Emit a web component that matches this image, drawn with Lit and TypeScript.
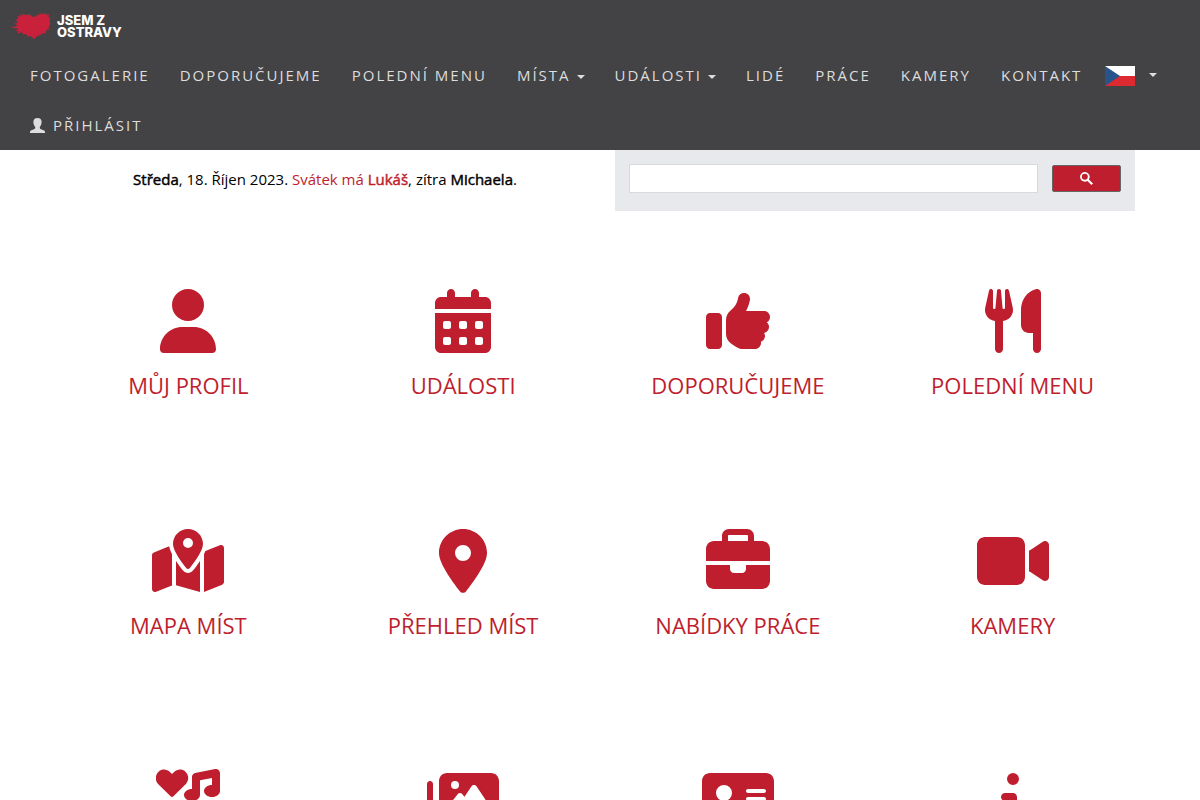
import { LitElement, html, svg, css } from "lit";
import { customElement } from "lit/decorators.js";

interface Tile {
  label: string;
  name?: string;
  width: number;
  path: string;
}

interface NavItem {
  label: string;
  menu?: boolean;
}

const NAV: NavItem[] = [
  { label: "Fotogalerie" },
  { label: "Doporučujeme" },
  { label: "Polední menu" },
  { label: "Místa", menu: true },
  { label: "Události", menu: true },
  { label: "Lidé" },
  { label: "Práce" },
  { label: "Kamery" },
  { label: "Kontakt" },
];

const TILES: Tile[] = [
  {
    label: "Můj profil",
    width: 448,
    path: "M224 256A128 128 0 1 0 224 0a128 128 0 1 0 0 256zm-45.7 48C79.8 304 0 383.8 0 482.3C0 498.7 13.3 512 29.7 512H418.3c16.4 0 29.7-13.3 29.7-29.7C448 383.8 368.2 304 269.7 304H178.3z",
  },
  {
    label: "Události",
    width: 448,
    path: "M128 0c17.7 0 32 14.3 32 32V64H288V32c0-17.7 14.3-32 32-32s32 14.3 32 32V64h48c26.5 0 48 21.5 48 48v48H0V112C0 85.5 21.5 64 48 64H96V32c0-17.7 14.3-32 32-32zM0 192H448V464c0 26.5-21.5 48-48 48H48c-26.5 0-48-21.5-48-48V192zm64 80v32c0 8.8 7.2 16 16 16h32c8.8 0 16-7.2 16-16V272c0-8.8-7.2-16-16-16H80c-8.8 0-16 7.2-16 16zm128 0v32c0 8.8 7.2 16 16 16h32c8.8 0 16-7.2 16-16V272c0-8.8-7.2-16-16-16H208c-8.8 0-16 7.2-16 16zm144-16c-8.8 0-16 7.2-16 16v32c0 8.8 7.2 16 16 16h32c8.8 0 16-7.2 16-16V272c0-8.8-7.2-16-16-16H336zM64 400v32c0 8.8 7.2 16 16 16h32c8.8 0 16-7.2 16-16V400c0-8.8-7.2-16-16-16H80c-8.8 0-16 7.2-16 16zm144-16c-8.8 0-16 7.2-16 16v32c0 8.8 7.2 16 16 16h32c8.8 0 16-7.2 16-16V400c0-8.8-7.2-16-16-16H208zm112 16v32c0 8.8 7.2 16 16 16h32c8.8 0 16-7.2 16-16V400c0-8.8-7.2-16-16-16H336c-8.8 0-16 7.2-16 16z",
  },
  {
    label: "Doporučujeme",
    width: 512,
    path: "M313.4 32.9c26 5.2 42.9 30.5 37.7 56.5l-2.3 11.4c-5.3 26.7-15.1 52.1-28.8 75.2H464c26.5 0 48 21.5 48 48c0 18.5-10.5 34.6-25.9 42.6C497 275.4 504 288.9 504 304c0 23.4-16.8 42.9-38.9 47.1c4.4 7.3 6.9 15.8 6.9 24.9c0 21.3-13.9 39.4-33.1 45.6c.7 3.3 1.1 6.8 1.1 10.4c0 26.5-21.5 48-48 48H294.5c-19 0-37.5-5.6-53.3-16.1l-38.5-25.7C176 420.4 160 390.4 160 358.3V320 272 247.1c0-29.2 13.3-56.7 36-75l7.4-5.9c26.5-21.2 44.6-51 51.2-84.2l2.3-11.4c5.2-26 30.5-42.9 56.5-37.7zM32 192H96c17.7 0 32 14.3 32 32V448c0 17.7-14.3 32-32 32H32c-17.7 0-32-14.3-32-32V224c0-17.7 14.3-32 32-32z",
  },
  {
    label: "Polední menu",
    width: 448,
    path: "M416 0C400 0 288 32 288 176V288c0 35.3 28.7 64 64 64h32V480c0 17.7 14.3 32 32 32s32-14.3 32-32V352 240 32c0-17.7-14.3-32-32-32zM64 16C64 7.8 57.9 1 49.7 .1S34.2 4.6 32.4 12.5L2.1 148.8C.7 155.1 0 161.5 0 167.9c0 45.9 35.1 83.6 80 87.7V480c0 17.7 14.3 32 32 32s32-14.3 32-32V255.6c44.9-4.1 80-41.8 80-87.7c0-6.4-.7-12.8-2.1-19.1L191.6 12.5c-1.8-8-9.3-13.3-17.4-12.4S160 7.8 160 16V150.2c0 5.4-4.4 9.8-9.8 9.8c-5.1 0-9.3-3.9-9.8-9L127.9 14.6C127.2 6.3 120.3 0 112 0s-15.2 6.3-15.9 14.6L83.7 151c-.5 5.1-4.7 9-9.8 9c-5.4 0-9.8-4.4-9.8-9.8V16zm48.3 152l-.3 0-.3 0 .3-.7 .3 .7z",
  },
  {
    label: "Mapa míst",
    width: 576,
    path: "M408 120c0 54.6-73.1 151.9-105.2 192c-7.7 9.6-22 9.6-29.6 0C241.1 271.9 168 174.6 168 120C168 53.7 221.7 0 288 0s120 53.7 120 120zm8 80.4c3.5-6.9 6.7-13.8 9.6-20.6c.5-1.2 1-2.5 1.5-3.7l116-46.4C558.9 123.4 576 135 576 152V422.8c0 9.8-6 18.6-15.1 22.3L416 503V200.4zM137.6 138.3c2.4 14.1 7.2 28.3 12.8 41.5c2.9 6.8 6.1 13.7 9.6 20.6V451.8L32.9 502.7C17.1 509 0 497.4 0 480.4V209.6c0-9.8 6-18.6 15.1-22.3l122.6-49zM327.8 332c13.9-17.4 35.7-45.7 56.2-77V504.3L192 449.4V255c20.5 31.3 42.3 59.6 56.2 77c20.5 25.6 59.1 25.6 79.6 0zM288 152a40 40 0 1 0 0-80 40 40 0 1 0 0 80z",
  },
  {
    label: "Přehled míst",
    width: 384,
    path: "M215.7 499.2C267 435 384 279.4 384 192C384 86 298 0 192 0S0 86 0 192c0 87.4 117 243 168.3 307.2c12.3 15.3 35.1 15.3 47.4 0zM192 128a64 64 0 1 1 0 128 64 64 0 1 1 0-128z",
  },
  {
    label: "Nabídky práce",
    width: 512,
    path: "M184 48H328c4.4 0 8 3.6 8 8V96H176V56c0-4.4 3.6-8 8-8zm-56 8V96H64C28.7 96 0 124.7 0 160v96H192 320 512V160c0-35.3-28.7-64-64-64H384V56c0-30.9-25.1-56-56-56H184c-30.9 0-56 25.1-56 56zM512 288H320v32c0 17.7-14.3 32-32 32H224c-17.7 0-32-14.3-32-32V288H0V416c0 35.3 28.7 64 64 64H448c35.3 0 64-28.7 64-64V288z",
  },
  {
    label: "Kamery",
    width: 576,
    path: "M0 128C0 92.7 28.7 64 64 64H320c35.3 0 64 28.7 64 64V384c0 35.3-28.7 64-64 64H64c-35.3 0-64-28.7-64-64V128zM559.1 99.8c10.4 5.6 16.9 16.4 16.9 28.2V384c0 11.8-6.5 22.6-16.9 28.2s-23 5-32.9-1.6l-96-64L416 337.1V320 192 174.9l14.2-9.5 96-64c9.8-6.5 22.4-7.2 32.9-1.6z",
  },
  {
    label: "",
    name: "Zábava",
    width: 512,
    path: "M500.3 7.3C507.7 13.3 512 22.4 512 32V176c0 26.5-28.7 48-64 48s-64-21.5-64-48s28.7-48 64-48V71L352 90.2V208c0 26.5-28.7 48-64 48s-64-21.5-64-48s28.7-48 64-48V64c0-15.3 10.8-28.4 25.7-31.4l160-32c9.4-1.9 19.1 .6 26.6 6.6zM116.7 218.9L18.6 121.6C-9.9 93-8 45.5 22.6 19.4c26.5-22.6 66-18.6 90.4 6.5L128 40l15-14.1c24.4-25.1 63.9-29.1 90.4-6.5 30.6 26.1 32.3 73.6 3.8 102.2l-97.9 97.3c-6.3 6.3-16.3 6.3-22.6 0z",
  },
  {
    label: "",
    name: "Fotografie",
    width: 576,
    path: "M160 32c-35.3 0-64 28.7-64 64V320c0 35.3 28.7 64 64 64H512c35.3 0 64-28.7 64-64V96c0-35.3-28.7-64-64-64H160zM396 138.7l96 144c4.9 7.4 5.4 16.8 1.2 24.6S480.9 320 472 320H328 280 200c-9.2 0-17.6-5.3-21.6-13.6s-2.9-18.2 2.9-25.4l64-80c4.6-5.7 11.4-9 18.7-9s14.2 3.3 18.7 9l17.3 21.6 56-84C360.5 132 368 128 376 128s15.5 4 20 10.7zM192 128a32 32 0 1 1 64 0 32 32 0 1 1 -64 0zM48 120c0-13.3-10.7-24-24-24S0 106.7 0 120V344c0 75.1 60.9 136 136 136H456c13.3 0 24-10.7 24-24s-10.7-24-24-24H136c-48.6 0-88-39.4-88-88V120z",
  },
  {
    label: "",
    name: "Kontakt",
    width: 576,
    path: "M64 32C28.7 32 0 60.7 0 96V416c0 35.3 28.7 64 64 64H512c35.3 0 64-28.7 64-64V96c0-35.3-28.7-64-64-64H64zm80 256h64c44.2 0 80 35.8 80 80c0 8.8-7.2 16-16 16H80c-8.8 0-16-7.2-16-16c0-44.2 35.8-80 80-80zm-32-96a64 64 0 1 1 128 0 64 64 0 1 1 -128 0zm256-32H496c8.8 0 16 7.2 16 16s-7.2 16-16 16H368c-8.8 0-16-7.2-16-16s7.2-16 16-16zm0 64H496c8.8 0 16 7.2 16 16s-7.2 16-16 16H368c-8.8 0-16-7.2-16-16s7.2-16 16-16z",
  },
  {
    label: "",
    name: "Informace",
    width: 192,
    path: "M48 80a48 48 0 1 1 96 0A48 48 0 1 1 48 80zM0 224c0-17.7 14.3-32 32-32H96c17.7 0 32 14.3 32 32V448h32c17.7 0 32 14.3 32 32s-14.3 32-32 32H32c-17.7 0-32-14.3-32-32s14.3-32 32-32H64V256H32c-17.7 0-32-14.3-32-32z",
  },
];

@customElement("app-root")
export class AppRoot extends LitElement {
  static styles = css`
    :host {
      display: block;
      min-height: 100vh;
      background: #fff;
      color: #000;
      font: 15px/20px "Open Sans", sans-serif;
    }
    * {
      box-sizing: border-box;
    }
    a {
      color: inherit;
      text-decoration: none;
    }
    .navbar {
      background: #434345;
      color: #ddd;
    }
    .brand {
      display: flex;
      align-items: center;
      gap: 6px;
      width: max-content;
      height: 50px;
      padding: 2px 10px 0 11px;
      color: #fff;
    }
    .splash {
      display: block;
      width: 40px;
      height: 28px;
    }
    .brand-text {
      display: flex;
      flex-direction: column;
      font: 800 13px/12px Inter, sans-serif;
    }
    .menu {
      display: flex;
      flex-wrap: wrap;
      margin: 0;
      padding: 0 15px;
      list-style: none;
      letter-spacing: 2px;
      text-transform: uppercase;
    }
    .menu-link {
      display: flex;
      align-items: center;
      height: 50px;
      padding: 0 15px;
      gap: 6px;
      white-space: nowrap;
    }
    .flag-link {
      padding: 2px 8px 0;
      gap: 14px;
    }
    .login-link {
      gap: 8px;
    }
    .flag {
      display: block;
      width: 30px;
      height: 20px;
    }
    .caret {
      border: 4px solid transparent;
      border-top-color: currentColor;
      border-bottom: 0;
    }
    .menu-link .caret {
      margin-top: 3px;
    }
    .flag-link .caret {
      margin: 0 0 2px;
    }
    .person {
      display: block;
      width: 15px;
      height: 15px;
      fill: currentColor;
    }
    .content {
      padding: 0 50px;
    }
    .info {
      display: grid;
      grid-template-columns: 1fr 1fr;
    }
    .date {
      margin: 0;
      padding-top: 19px;
      text-align: center;
    }
    .strong {
      font-weight: 400;
      -webkit-text-stroke: 0.03em currentColor;
    }
    .red {
      color: #be1e2d;
    }
    .search {
      display: flex;
      align-items: center;
      gap: 14px;
      margin: 0 15px;
      padding: 14px 14px 18px;
      background: #e8e9ed;
    }
    .query {
      flex: 1;
      min-width: 0;
      height: 29px;
      padding: 0 8px;
      border: 1px solid #d9d9d9;
      border-radius: 0;
      background: #fff;
      font: inherit;
    }
    .go {
      display: flex;
      align-items: center;
      justify-content: center;
      width: 69px;
      height: 27px;
      padding: 0;
      border: 1px solid #666;
      border-radius: 2px;
      background: #be1e2d;
    }
    .lens {
      display: block;
      width: 13px;
      height: 13px;
      fill: #fff;
    }
    .tiles {
      display: grid;
      grid-template-columns: repeat(4, 1fr);
      grid-auto-rows: 240px;
      padding: 78px 0 0 1px;
    }
    .tile {
      display: flex;
      flex-direction: column;
      align-items: center;
      gap: 17px;
      justify-self: center;
      align-self: start;
      color: #be1e2d;
      font-size: 22px;
      line-height: 30px;
      text-transform: uppercase;
    }
    .icon {
      display: block;
      height: 64px;
      fill: currentColor;
    }
  `;

  private tile(t: Tile) {
    return html`<a class="tile" href="#" aria-label=${t.label || t.name || ""}>
      <svg class="icon" viewBox="0 0 ${t.width} 512" aria-hidden="true">${svg`<path d=${t.path}></path>`}</svg>
      ${t.label ? html`<span>${t.label}</span>` : null}
    </a>`;
  }

  render() {
    return html`
      <header class="navbar">
        <a class="brand" href="#">
          <svg class="splash" viewBox="0 0 40 28" aria-hidden="true">
            <g fill="#c9213c">
              <path
                d="M23 26.500C20 23.500 14 22 10 19C6 15.500 5 9 7.500 5.500C10 2 19 1.500 23 6C26 2 34 1 37 4C40 8 38.500 14 36 18C33 22 26 23 23 26.500Z"
              ></path>
              <path
                d="M0 15.800L7 13.500L3 11.500L8 11L4.500 7.500L9 7L6 4L10 5L8.500 1.500L12 4L12 1L14.500 4L17 2L17 4L19 1.500L20 6L23 4.500L26 5L25.500 2L28 4L29 1L30.500 3L32.500 .500L33 3L35 .500L35.500 3L38.500 2L37 5.500L39.500 6L38 8.500L39.500 12L37.500 14L38 17.500L35.500 17L34 21.500L31 21L29 23.500L26 23L23 27.500L20.500 24L17 24.500L15 22L12 22.500L11 20L6 22L8 19L4.500 19.500L7.500 16.500Z"
              ></path>
            </g>
          </svg>
          <span class="brand-text"><span>JSEM Z</span><span>OSTRAVY</span></span>
        </a>
        <nav>
          <ul class="menu">
            ${NAV.map(
              (n) => html`<li>
                <a class="menu-link" href="#">${n.label}${n.menu ? html`<span class="caret"></span>` : null}</a>
              </li>`
            )}
            <li>
              <a class="menu-link flag-link" href="#" aria-label="Čeština">
                <svg class="flag" viewBox="0 0 30 20" aria-hidden="true">
                  <path fill="#fff" d="M0 0h30v10H0z"></path>
                  <path fill="#dc2a30" d="M0 10h30v10H0z"></path>
                  <path fill="#28548c" d="M0 0l15 10L0 20z"></path>
                </svg>
                <span class="caret"></span>
              </a>
            </li>
          </ul>
          <ul class="menu">
            <li>
              <a class="menu-link login-link" href="#">
                <svg class="person" viewBox="0 0 15 15" aria-hidden="true">
                  <path
                    d="M7.500 0C10.200 0 11.600 1.600 11.600 3.900C11.600 6 10.900 7.600 9.800 8.700V10C9.800 10.500 10 10.800 10.500 11L13.500 12.200C14.500 12.600 15 13.100 15 13.900V15H0V13.900C0 13.100.5 12.600 1.500 12.200L4.500 11C5 10.800 5.200 10.500 5.200 10V8.700C4.100 7.600 3.400 6 3.400 3.900C3.400 1.600 4.800 0 7.500 0Z"
                  ></path>
                </svg>
                Přihlásit
              </a>
            </li>
          </ul>
        </nav>
      </header>
      <main class="content">
        <div class="info">
          <p class="date">
            <b class="strong">Středa</b>, 18. Říjen 2023.
            <span class="red">Svátek má <b class="strong">Lukáš</b></span>, zítra <b class="strong">Michaela</b>.
          </p>
          <form class="search" role="search" @submit=${(e: Event) => e.preventDefault()}>
            <input class="query" type="text" aria-label="Hledat" />
            <button class="go" type="submit" aria-label="Vyhledat">
              <svg class="lens" viewBox="0 0 13 13" aria-hidden="true">
                <path
                  d="M4.800 0a4.800 4.800 0 0 1 4.100 7.400L13 11.500L11.500 13L7.400 8.900A4.800 4.800 0 1 1 4.800 0zm0 1.800a3 3 0 1 0 0 6a3 3 0 1 0 0-6z"
                ></path>
              </svg>
            </button>
          </form>
        </div>
        <div class="tiles">${TILES.map((t) => this.tile(t))}</div>
      </main>
    `;
  }
}
